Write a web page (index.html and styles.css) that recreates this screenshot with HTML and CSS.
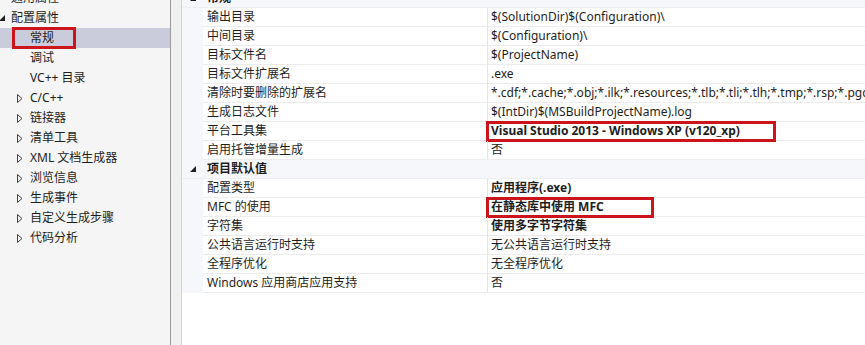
FILE: index.html
```html
<!DOCTYPE html>
<html lang="zh-CN">
<head>
<meta charset="utf-8">
<title>属性页</title>
<link rel="stylesheet" href="styles.css">
</head>
<body>
<div class="app">
  <div class="tree">
    <div class="node lvl1"><span class="tw"></span><span class="lbl">通用属性</span></div>
    <div class="node lvl1"><span class="tw"><svg class="exp" width="6" height="6" viewBox="0 0 6 6"><path d="M6 0V6H0Z" fill="#1e1e1e"/></svg></span><span class="lbl">配置属性</span></div>
    <div class="node lvl2 sel"><span class="tw"></span><span class="lbl">常规</span><span class="mark mark-tree"></span></div>
    <div class="node lvl2"><span class="tw"></span><span class="lbl">调试</span></div>
    <div class="node lvl2"><span class="tw"></span><span class="lbl">VC++ 目录</span></div>
    <div class="node lvl2"><span class="tw"><svg class="col" width="6" height="9" viewBox="0 0 6 9"><path d="M0.5 0.5L5 4.5L0.5 8.5Z" fill="none" stroke="#404040" stroke-width="1"/></svg></span><span class="lbl">C/C++</span></div>
    <div class="node lvl2"><span class="tw"><svg class="col" width="6" height="9" viewBox="0 0 6 9"><path d="M0.5 0.5L5 4.5L0.5 8.5Z" fill="none" stroke="#404040" stroke-width="1"/></svg></span><span class="lbl">链接器</span></div>
    <div class="node lvl2"><span class="tw"><svg class="col" width="6" height="9" viewBox="0 0 6 9"><path d="M0.5 0.5L5 4.5L0.5 8.5Z" fill="none" stroke="#404040" stroke-width="1"/></svg></span><span class="lbl">清单工具</span></div>
    <div class="node lvl2"><span class="tw"><svg class="col" width="6" height="9" viewBox="0 0 6 9"><path d="M0.5 0.5L5 4.5L0.5 8.5Z" fill="none" stroke="#404040" stroke-width="1"/></svg></span><span class="lbl">XML 文档生成器</span></div>
    <div class="node lvl2"><span class="tw"><svg class="col" width="6" height="9" viewBox="0 0 6 9"><path d="M0.5 0.5L5 4.5L0.5 8.5Z" fill="none" stroke="#404040" stroke-width="1"/></svg></span><span class="lbl">浏览信息</span></div>
    <div class="node lvl2"><span class="tw"><svg class="col" width="6" height="9" viewBox="0 0 6 9"><path d="M0.5 0.5L5 4.5L0.5 8.5Z" fill="none" stroke="#404040" stroke-width="1"/></svg></span><span class="lbl">生成事件</span></div>
    <div class="node lvl2"><span class="tw"><svg class="col" width="6" height="9" viewBox="0 0 6 9"><path d="M0.5 0.5L5 4.5L0.5 8.5Z" fill="none" stroke="#404040" stroke-width="1"/></svg></span><span class="lbl">自定义生成步骤</span></div>
    <div class="node lvl2"><span class="tw"><svg class="col" width="6" height="9" viewBox="0 0 6 9"><path d="M0.5 0.5L5 4.5L0.5 8.5Z" fill="none" stroke="#404040" stroke-width="1"/></svg></span><span class="lbl">代码分析</span></div>
  </div>
  <div class="splitter"></div>
  <div class="props">
    <div class="grid">
      <div class="cat"><span class="gut"><svg class="exp" width="6" height="6" viewBox="0 0 6 6"><path d="M6 0V6H0Z" fill="#1e1e1e"/></svg></span><span class="cat-name">常规</span></div>
      <div class="prop"><span class="gut"></span><span class="name">输出目录</span><span class="val">$(SolutionDir)$(Configuration)\</span></div>
      <div class="prop"><span class="gut"></span><span class="name">中间目录</span><span class="val">$(Configuration)\</span></div>
      <div class="prop"><span class="gut"></span><span class="name">目标文件名</span><span class="val">$(ProjectName)</span></div>
      <div class="prop"><span class="gut"></span><span class="name">目标文件扩展名</span><span class="val">.exe</span></div>
      <div class="prop"><span class="gut"></span><span class="name">清除时要删除的扩展名</span><span class="val">*.cdf;*.cache;*.obj;*.ilk;*.resources;*.tlb;*.tli;*.tlh;*.tmp;*.rsp;*.pgc;*.pgd;*.meta;$(TargetPath)</span></div>
      <div class="prop"><span class="gut"></span><span class="name">生成日志文件</span><span class="val">$(IntDir)$(MSBuildProjectName).log</span></div>
      <div class="prop"><span class="gut"></span><span class="name">平台工具集</span><span class="val bold">Visual Studio 2013 - Windows XP (v120_xp)<span class="mark mark-vs"></span></span></div>
      <div class="prop"><span class="gut"></span><span class="name">启用托管增量生成</span><span class="val">否</span></div>
      <div class="cat"><span class="gut"><svg class="exp" width="6" height="6" viewBox="0 0 6 6"><path d="M6 0V6H0Z" fill="#1e1e1e"/></svg></span><span class="cat-name">项目默认值</span></div>
      <div class="prop"><span class="gut"></span><span class="name">配置类型</span><span class="val bold">应用程序(.exe)</span></div>
      <div class="prop"><span class="gut"></span><span class="name">MFC 的使用</span><span class="val bold">在静态库中使用 MFC<span class="mark mark-mfc"></span></span></div>
      <div class="prop"><span class="gut"></span><span class="name">字符集</span><span class="val bold">使用多字节字符集</span></div>
      <div class="prop"><span class="gut"></span><span class="name">公共语言运行时支持</span><span class="val">无公共语言运行时支持</span></div>
      <div class="prop"><span class="gut"></span><span class="name">全程序优化</span><span class="val">无全程序优化</span></div>
      <div class="prop"><span class="gut"></span><span class="name">Windows 应用商店应用支持</span><span class="val">否</span></div>
    </div>
  </div>
</div>
</body>
</html>
```
FILE: styles.css
```css
html, body {
  margin: 0;
  padding: 0;
  background: #ffffff;
  overflow: hidden;
}
body {
  font-family: "Noto Sans", "Noto Sans CJK SC", sans-serif;
  font-size: 12px;
  color: #1e1e1e;
}
.app {
  display: flex;
  width: 865px;
  height: 345px;
  overflow: hidden;
}
.tree {
  width: 170px;
  flex: none;
  background: #f5f5f5;
  border-right: 1px solid #9a9a9a;
  margin-top: -12px;
  padding-bottom: 12px;
}
.node {
  position: relative;
  display: flex;
  align-items: center;
  height: 20px;
  white-space: nowrap;
}
.node.sel {
  background: #cbccdb;
}
.tw {
  display: flex;
  align-items: center;
  flex: none;
  height: 20px;
}
.lvl1 .tw {
  width: 11px;
}
.lvl1 .tw .exp {
  margin-left: -1px;
}
.lvl2 .tw {
  width: 30px;
  padding-left: 17px;
  box-sizing: border-box;
}
.lbl {
  line-height: 20px;
}
.mark {
  position: absolute;
  border: 3px solid #cc141c;
  box-sizing: border-box;
  pointer-events: none;
}
.mark-tree {
  left: 12px;
  top: -1px;
  width: 64px;
  height: 22px;
}
.splitter {
  width: 10px;
  flex: none;
  background: #f0f0f0;
  border-right: 1px solid #d4d4d4;
}
.props {
  flex: 1;
  min-width: 0;
  background: #ffffff;
}
.grid {
  margin-top: -11px;
}
.cat, .prop {
  display: grid;
  grid-template-columns: 21px 284px 1fr;
  height: 19px;
  box-sizing: border-box;
  white-space: nowrap;
}
.cat {
  background: #f5f7fa;
  border-bottom: 1px solid #eceef2;
}
.gut {
  background: #f5f7fa;
  display: flex;
  align-items: center;
  justify-content: flex-end;
  padding-right: 7px;
}
.cat-name {
  grid-column: 2 / 4;
  font-weight: bold;
  line-height: 18px;
  padding-left: 4px;
}
.name, .val {
  line-height: 18px;
  border-bottom: 1px solid #ececec;
  overflow: hidden;
}
.name {
  padding-left: 4px;
}
.val {
  position: relative;
  overflow: visible;
  border-left: 1px solid #e4e4e4;
  padding-left: 3px;
}
.val.bold {
  font-weight: bold;
}
.mark-vs {
  left: -2px;
  top: -1px;
  width: 290px;
  height: 21px;
}
.mark-mfc {
  left: -2px;
  top: -1px;
  width: 168px;
  height: 21px;
}
```
